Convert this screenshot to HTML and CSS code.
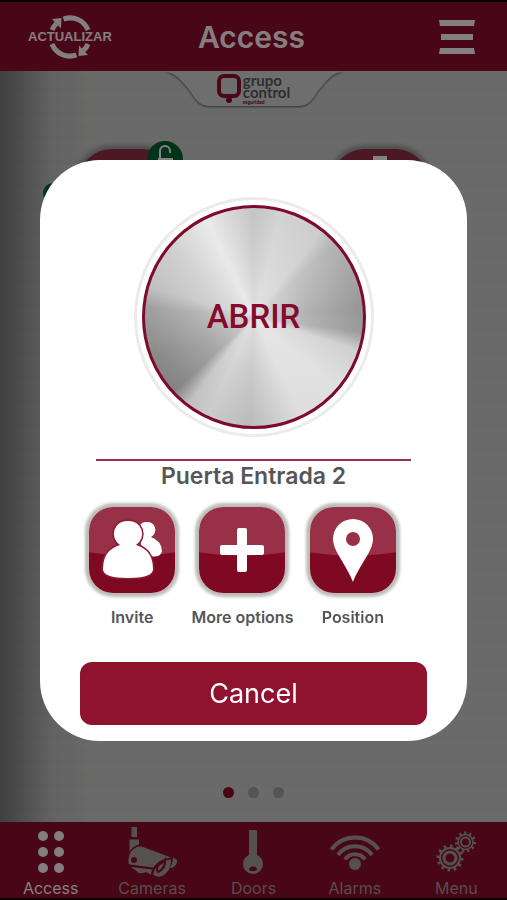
FILE: index.html
```html
<!DOCTYPE html>
<html lang="en">
<head>
<meta charset="utf-8">
<meta name="viewport" content="width=device-width, initial-scale=1">
<title>Access</title>
<link rel="stylesheet" href="styles.css">
</head>
<body>
<div class="app">
  <header class="topbar">
    <button class="refresh" type="button">
      <svg class="refresh-icon" viewBox="0 0 44 46" aria-hidden="true">
        <g fill="none" stroke="currentColor" stroke-width="5">
          <path d="M15.500 5.200A19 19 0 0 1 40 16"/>
          <path d="M4 16A19 19 0 0 1 8.500 9.500"/>
          <path d="M28.500 40.800A19 19 0 0 1 4 30"/>
          <path d="M40 30A19 19 0 0 1 35.500 36.500"/>
        </g>
        <path fill="currentColor" d="M4 5L13.500 4L13 14.500ZM40 41L30.500 42L31 31.500Z"/>
      </svg>
      <span class="refresh-label">ACTUALIZAR</span>
    </button>
    <h1 class="title">Access</h1>
    <button class="burger" type="button" aria-label="Menu">
      <svg viewBox="0 0 36 36" aria-hidden="true"><path fill="currentColor" d="M0 1H36L35 7H1ZM2 15H34V21H2ZM1 29H35L36 35H0Z"/></svg>
    </button>
  </header>

  <main class="home">
    <div class="brand">
      <svg class="brand-shape" viewBox="0 0 180 38" aria-hidden="true">
        <path class="brand-fill" d="M0 0C12 2 18 10 26 20C32 29 36 35 46 35H134C144 35 148 29 154 20C162 10 168 2 180 0Z"/>
      </svg>
      <div class="brand-content">
        <svg class="brand-mark" viewBox="0 0 24 30" aria-hidden="true">
          <rect x="2" y="2" width="20" height="20" rx="5" fill="none" stroke="currentColor" stroke-width="4"/>
          <circle cx="12" cy="26" r="3" fill="currentColor"/>
        </svg>
        <div class="brand-text"><span>grupo</span><span>control</span><small>seguridad</small></div>
      </div>
    </div>
    <div class="doors">
      <div class="door">
        <span class="door-badge"><svg viewBox="0 0 36 36" aria-hidden="true"><path d="M13 18V10a5 5 0 0 1 10 0v2M12 18h13v12H12Z" fill="none" stroke="currentColor" stroke-width="2"/></svg></span>
        <span class="door-status"></span>
      </div>
      <div class="door">
        <svg class="door-glyph" viewBox="0 0 16 30" aria-hidden="true"><path d="M1 1h14v4h-3v24H4V5H1Z" fill="currentColor"/></svg>
      </div>
    </div>
    <div class="pager"><i class="dot dot-active"></i><i class="dot"></i><i class="dot"></i></div>
  </main>

  <nav class="tabs">
    <a class="tab tab-active" href="#access">
      <svg viewBox="0 0 60 52" fill="currentColor" aria-hidden="true"><circle cx="22" cy="10" r="5"/><circle cx="38" cy="10" r="5"/><circle cx="22" cy="26" r="5"/><circle cx="38" cy="26" r="5"/><circle cx="22" cy="42" r="5"/><circle cx="38" cy="42" r="5"/></svg>
      <span>Access</span>
    </a>
    <a class="tab" href="#cameras">
      <svg viewBox="0 0 60 52" fill="currentColor" aria-hidden="true">
        <path d="M9.500 1H15V11H9.500ZM7.500 13.500H17V18.500C13 19.500 10 22 7.500 25Z"/>
        <path d="M14 21.500Q17 20 21 21L49 31.500Q38 32.500 31 41.500L8 38.500Q6 38 6.500 33Q7 25 14 21.500Z"/>
        <path d="M9 41L30 43.500L29 48.500L24 46Q17 49 14 44.500Z"/>
        <path d="M33 43Q38 34.500 49 33.500Q49 44 42 49Q36 52.500 31 48.500Z"/>
        <path d="M51 31.500L55 34Q56 38 51 41.500L47.500 42Q51 37 51 31.500Z"/>
        <circle class="tab-cut" cx="12" cy="34" r="3"/>
        <path class="tab-line" d="M36 46Q33 42 38 38Q42 36 43 34Q44 42 36 46Z"/>
      </svg>
      <span>Cameras</span>
    </a>
    <a class="tab" href="#doors">
      <svg viewBox="0 0 60 52" fill="currentColor" aria-hidden="true"><path d="M26 5Q26 4 27 4H33Q34 4 34 5V29Q40 32 40 38A10 10 0 0 1 20 38Q20 32 26 29Z"/><path class="tab-cut" d="M26 44Q26 40.500 30 40.500T34 44Q30 46.500 26 44Z"/></svg>
      <span>Doors</span>
    </a>
    <a class="tab" href="#alarms">
      <svg viewBox="0 0 60 52" fill="none" stroke="currentColor" stroke-width="4" aria-hidden="true"><path d="M6.500 23.500A29 29 0 0 1 53.500 23.500M13 29A21 21 0 0 1 47 29M20 33.500A12 12 0 0 1 40 33.500"/><circle cx="30" cy="38" r="6" fill="currentColor" stroke="none"/></svg>
      <span>Alarms</span>
    </a>
    <a class="tab" href="#menu">
      <svg viewBox="0 0 60 52" fill="none" stroke="currentColor" aria-hidden="true">
        <circle cx="24" cy="32" r="12" stroke-width="3" pathLength="120" stroke-dasharray="4 6"/>
        <circle cx="24" cy="32" r="10" stroke-width="2"/>
        <circle cx="24" cy="32" r="6" stroke-width="3"/>
        <circle cx="39.500" cy="16" r="9" stroke-width="3" pathLength="110" stroke-dasharray="4 6"/>
        <circle cx="39.500" cy="16" r="7.500" stroke-width="1.500"/>
        <circle cx="39.500" cy="16" r="4.500" stroke-width="2"/>
      </svg>
      <span>Menu</span>
    </a>
  </nav>
</div>

<div class="backdrop">
  <section class="dialog" role="dialog" aria-modal="true" aria-labelledby="door-name">
    <button class="knob" type="button"><span class="knob-face">ABRIR</span></button>
    <h2 class="door-name" id="door-name">Puerta Entrada 2</h2>
    <div class="actions">
      <button class="action" type="button">
        <span class="tile"><svg viewBox="0 0 86 86" fill="currentColor" aria-hidden="true">
          <path d="M57 15A8 8 0 0 1 62 30Q73 34 73 45Q70 51 62 49L52 38L51 18Q53 15 57 15Z"/>
          <path class="person" d="M39 14A13 13 0 0 1 47 38Q64 43 64 62Q64 71 39 71T14 62Q14 43 31 38A13 13 0 0 1 39 14Z"/>
        </svg></span>
        <span>Invite</span>
      </button>
      <button class="action" type="button">
        <span class="tile"><svg viewBox="0 0 86 86" fill="currentColor" aria-hidden="true"><rect x="38" y="21" width="10" height="44" rx="2"/><rect x="21" y="38" width="44" height="10" rx="2"/></svg></span>
        <span>More options</span>
      </button>
      <button class="action" type="button">
        <span class="tile"><svg viewBox="0 0 86 86" fill="currentColor" aria-hidden="true"><path fill-rule="evenodd" d="M43 12A20 20 0 0 1 63 32C63 44 50 57 43 75C36 57 23 44 23 32A20 20 0 0 1 43 12ZM43 25a7 7 0 1 0 0 14a7 7 0 1 0 0-14Z"/></svg></span>
        <span>Position</span>
      </button>
    </div>
    <button class="cancel" type="button">Cancel</button>
  </section>
</div>
</body>
</html>
```
FILE: styles.css
```css
* { box-sizing: border-box; }

body {
  margin: 0;
  font-family: Inter, "Liberation Sans", sans-serif;
  background: #000;
}

button {
  margin: 0;
  padding: 0;
  border: 0;
  background: none;
  color: inherit;
  font: inherit;
}

svg { display: block; }

.app {
  display: flex;
  flex-direction: column;
  min-height: 100vh;
  border-top: 2px solid #000;
  border-bottom: 2px solid #000;
}

.topbar {
  display: grid;
  grid-template-columns: 1fr auto 1fr;
  align-items: center;
  height: 69px;
  padding: 0 32px 0 28px;
  background: #860c28;
  color: #f0e6e9;
}

.refresh {
  display: grid;
  place-items: center;
  justify-self: start;
}

.refresh-icon,
.refresh-label { grid-area: 1 / 1; }

.refresh-icon { width: 44px; height: 46px; }

.refresh-label {
  font-family: "Liberation Sans", sans-serif;
  font-size: 13px;
  font-weight: 700;
  line-height: 14px;
}

.title {
  margin: 0;
  font-size: 30px;
  font-weight: 600;
  line-height: 36px;
}

.burger { justify-self: end; width: 36px; }

.home {
  flex: 1;
  display: flex;
  flex-direction: column;
  background:
    linear-gradient(90deg, rgba(0, 0, 0, .4), rgba(0, 0, 0, .32) 14px, rgba(0, 0, 0, .08) 50px, transparent 100px),
    repeating-linear-gradient(180deg, #c3c3c2, #c0c0bf 6px, #c3c3c2 12px);
}

.brand {
  display: grid;
  justify-items: center;
}

.brand-shape,
.brand-content { grid-area: 1 / 1; }

.brand-shape {
  width: 180px;
  filter: drop-shadow(0 1px 1px #555);
}

.brand-fill { fill: #c9c9c9; }

.brand-content {
  position: relative;
  display: flex;
  gap: 2px;
  padding-top: 3px;
}

.brand-mark {
  width: 24px;
  height: 30px;
  color: #86102c;
}

.brand-text {
  display: flex;
  flex-direction: column;
  color: #555;
  font-family: Lato, sans-serif;
  font-size: 15px;
  font-weight: 700;
  line-height: 12px;
}

.brand-text small {
  color: #86102c;
  font-size: 5px;
  font-weight: 900;
  line-height: 8px;
}

.doors {
  display: grid;
  grid-template-columns: 1fr 1fr;
  justify-items: center;
  padding-top: 40px;
}

.door {
  position: relative;
  display: grid;
  justify-items: center;
  width: 96px;
  height: 96px;
  padding-top: 6px;
  border-radius: 32px;
  background: linear-gradient(#8a2c42 56%, #7d0923 56%);
  box-shadow: 0 0 4px 4px #919191;
  color: #eee;
}

.door-glyph { width: 16px; }

.door-badge,
.door-status {
  position: absolute;
  border-radius: 50%;
  background: #07602e;
}

.door-badge {
  top: -8px;
  right: -8px;
  width: 36px;
  height: 36px;
}

.door-status {
  top: 34px;
  left: -36px;
  width: 20px;
  height: 20px;
}

.pager {
  display: flex;
  justify-content: center;
  gap: 14px;
  margin-top: auto;
  padding-bottom: 24px;
}

.dot {
  width: 11px;
  height: 11px;
  border-radius: 50%;
  background: #999;
}

.dot-active { background: #860c28; }

.tabs {
  display: grid;
  grid-template-columns: repeat(5, 1fr);
  padding-top: 4px;
  background: #860c28;
}

.tab {
  display: grid;
  justify-items: center;
  color: #a08b8e;
  font-size: 16px;
  line-height: 20px;
  text-decoration: none;
}

.tab svg {
  width: 60px;
  height: 52px;
  color: #9b9490;
}

.tab-active,
.tab-active svg { color: #f0e6e9; }

.tab-cut { fill: #860c28; }

.tab-line {
  fill: none;
  stroke: #860c28;
  stroke-width: 2;
}

.backdrop {
  position: fixed;
  inset: 0;
  display: grid;
  grid-template-columns: minmax(0, 1fr);
  align-items: center;
  padding: 0 40px;
  background: rgba(0, 0, 0, .45);
}

.dialog {
  display: flex;
  flex-direction: column;
  padding: 37px 40px 16px;
  border-radius: 60px;
  background: #fff;
  color: #565656;
}

.knob {
  align-self: center;
  width: 240px;
  height: 240px;
  padding: 5px;
  border: 3px solid #ebebeb;
  border-radius: 50%;
}

.knob-face {
  display: grid;
  place-items: center;
  height: 100%;
  border: 3px solid #7e0a2c;
  border-radius: 50%;
  background:
    radial-gradient(circle, rgba(232, 232, 232, .8), rgba(232, 232, 232, .3) 35%, transparent 65%),
    conic-gradient(#c4c4c4, #d3d3d3 14deg, #cdcdcd 38deg, #b4b4b4 48deg, #989898 85deg, #9c9c9c 98deg, #d0d0d0 108deg, #e0e0e0 130deg, #dedede 155deg, #bcbcbc 182deg, #cbcbcb 205deg, #c0c0c0 217deg, #848484 227deg, #888 245deg, #a0a0a0 275deg, #c0c0c0 286deg, #d0d0d0 310deg, #eaeaea 334deg, #c4c4c4 360deg);
  background-origin: border-box;
  color: #86092e;
  font-family: Roboto, sans-serif;
  font-size: 33px;
  font-weight: 500;
}

.door-name {
  margin: 22px 16px 0;
  border-top: 2px solid #98304b;
  font-size: 23px;
  font-weight: 600;
  line-height: 30px;
  text-align: center;
}

.actions {
  display: grid;
  grid-template-columns: repeat(3, minmax(0, 1fr));
  margin: 16px 19px 0 -3px;
}

.action {
  display: grid;
  justify-content: center;
  justify-items: center;
  gap: 14px;
  font-size: 16px;
  font-weight: 600;
  line-height: 20px;
  white-space: nowrap;
}

.tile {
  width: 86px;
  height: 86px;
  border-radius: 24px;
  background: radial-gradient(ellipse 120px 49px at 50% 0, #983048 98%, #7f0822 100%);
  box-shadow: 0 0 3px 4px #bcbcb9;
  color: #fff;
}

.person {
  stroke: #8c1c36;
  stroke-width: 3;
  paint-order: stroke;
}

.cancel {
  margin-top: 35px;
  padding: 14px 0;
  border-radius: 12px;
  background: #8f122f;
  color: #fff;
  font-size: 27px;
  line-height: 35px;
}
```
